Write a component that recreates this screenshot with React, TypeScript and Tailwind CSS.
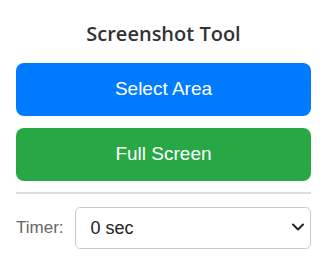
import React from "react";

export default function App() {
  return (
    <div className="w-[327px] h-[277px] bg-white px-4 pt-4" style={{ fontFamily: "'Liberation Sans', Arial, sans-serif" }}>
      <h1
        className="text-center text-[20px] font-semibold text-[#333] leading-[28px] mt-[4px] mb-[15px]"
        style={{ fontFamily: "'Open Sans', 'Noto Sans', sans-serif" }}
      >
        Screenshot Tool
      </h1>
      <div className="flex flex-col gap-3">
        <button className="h-[53px] w-full rounded-lg bg-[#007bff] text-white text-[19px]">Select Area</button>
        <button className="h-[53px] w-full rounded-lg bg-[#28a745] text-white text-[19px]">Full Screen</button>
      </div>
      <div className="h-[2px] bg-[#ddd] mt-[11px] mb-[13px]" />
      <div className="flex items-center gap-[11px]">
        <label className="text-[17px] text-[#666]">Timer:</label>
        <div className="relative flex-1">
          <select className="appearance-none w-full h-[42px] rounded-[5px] border border-[#ccc] bg-white pl-[15px] text-[18px] text-[#222]">
            <option>0 sec</option>
          </select>
          <svg className="absolute right-[6px] top-[15px] pointer-events-none" width="14" height="10" viewBox="0 0 14 10">
            <path d="M2 2.5 L7 7.5 L12 2.5" fill="none" stroke="#222" strokeWidth="2" strokeLinecap="round" strokeLinejoin="round" />
          </svg>
        </div>
      </div>
    </div>
  );
}
